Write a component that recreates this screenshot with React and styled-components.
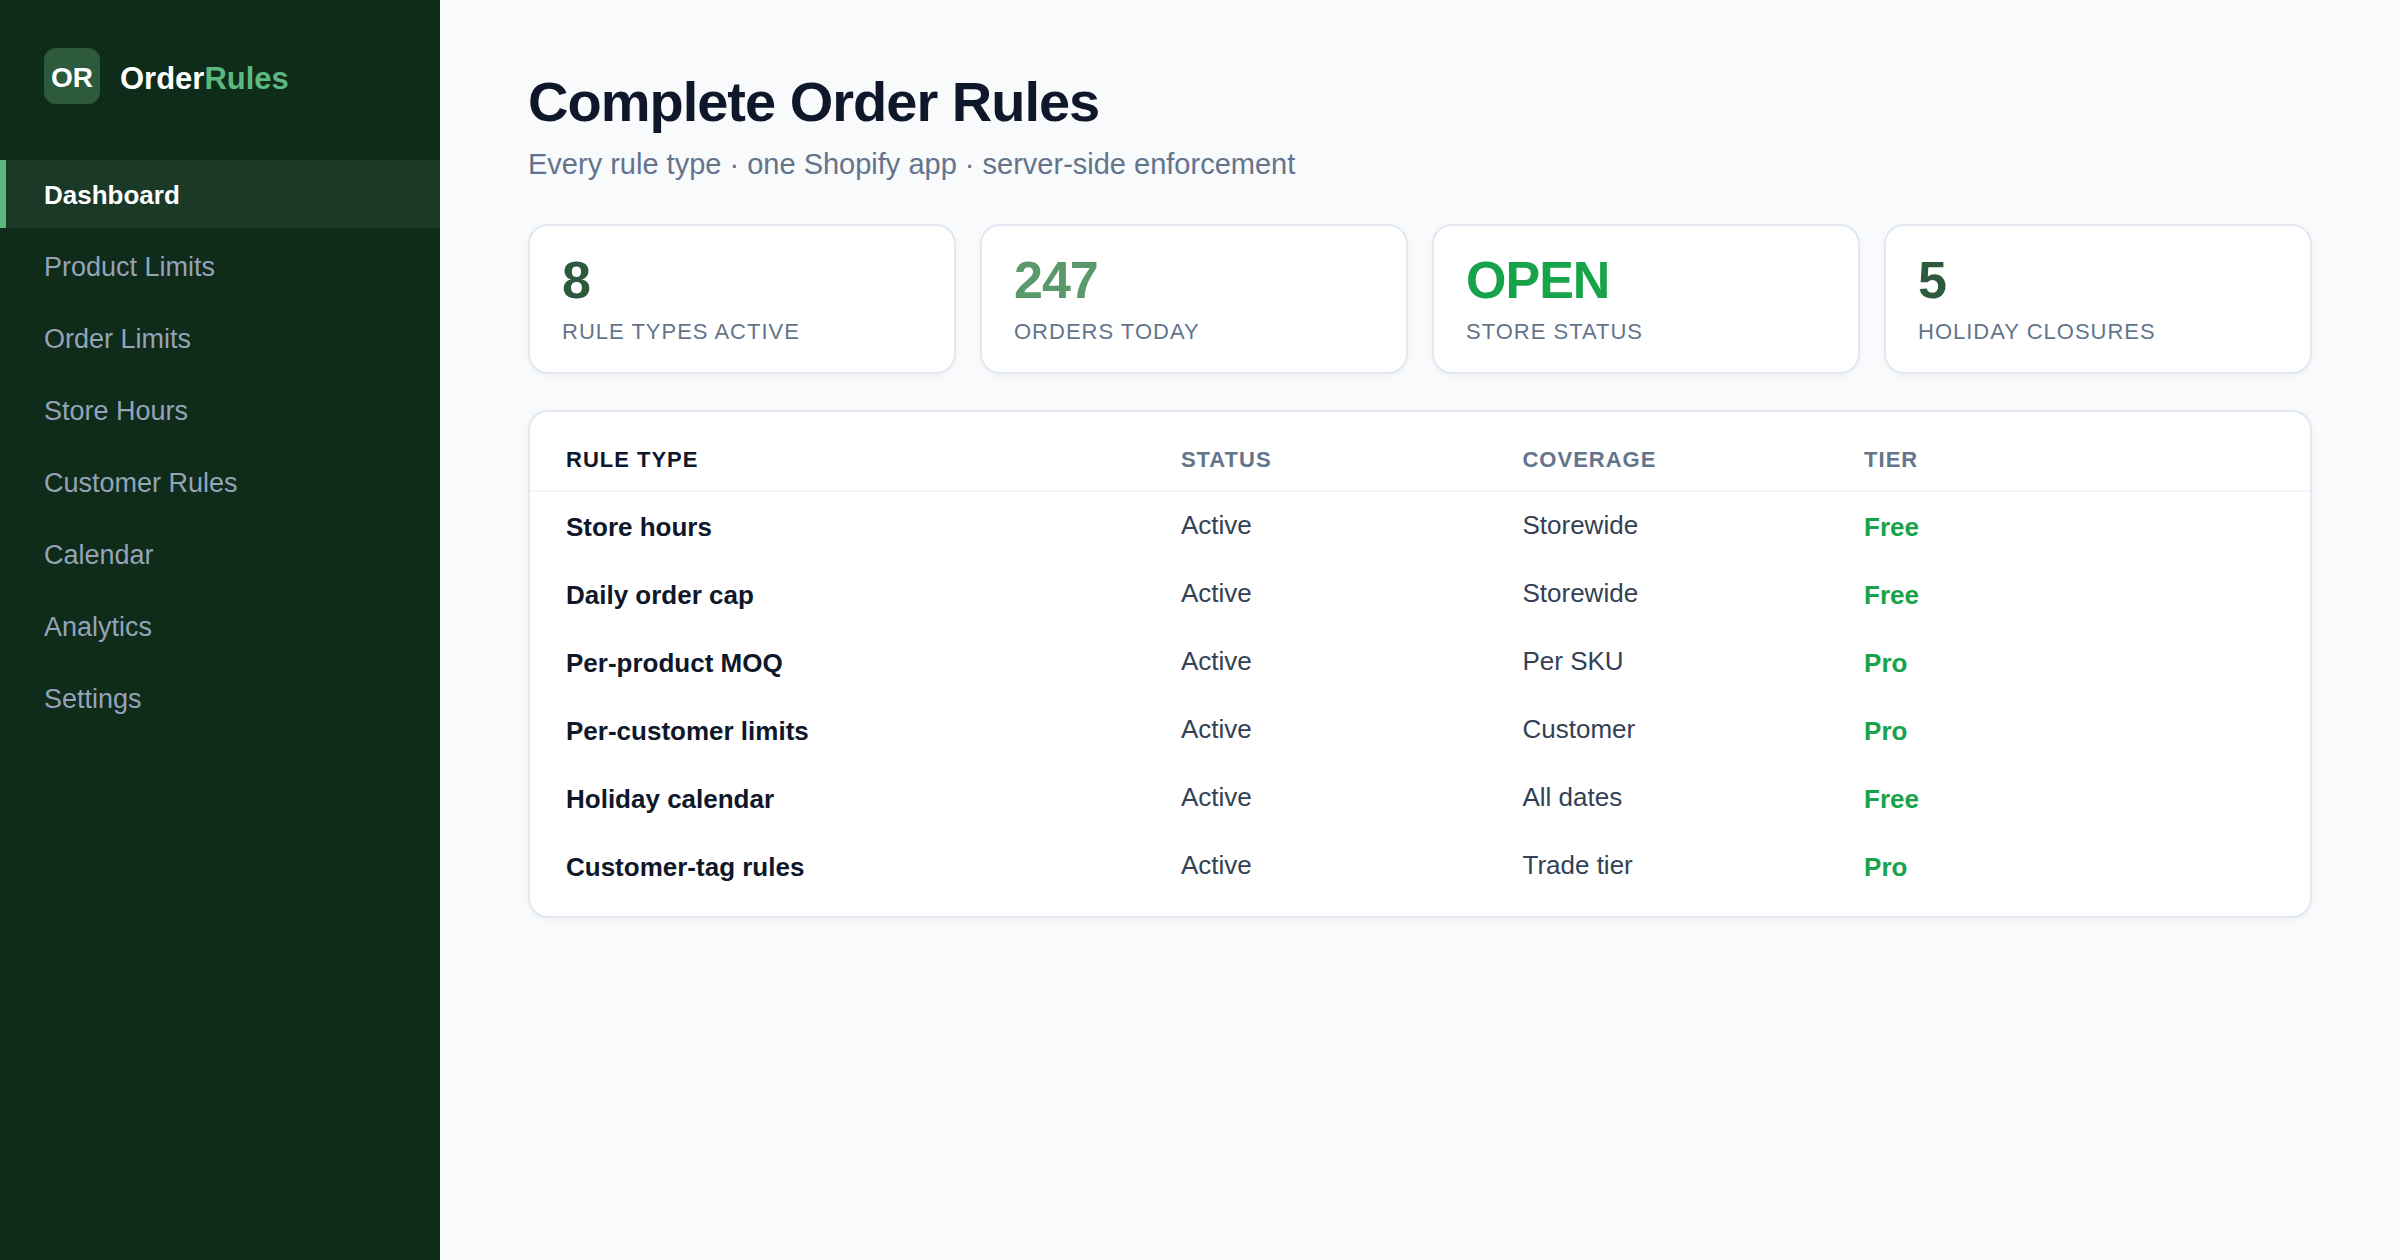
import { useState } from "react";
import styled, { createGlobalStyle } from "styled-components";

const GlobalStyle = createGlobalStyle`
  * {
    box-sizing: border-box;
  }

  body {
    margin: 0;
    background: #f8fafc;
    color: #0f172a;
    font-family: "Liberation Sans", Arial, sans-serif;
  }
`;

const Layout = styled.div`
  display: flex;
  min-height: 100vh;
`;

const Sidebar = styled.aside`
  flex: 0 0 440px;
  padding-top: 48px;
  background: #0f2b1a;
`;

const Brand = styled.div`
  display: flex;
  align-items: center;
  gap: 20px;
  margin: 0 44px 56px;
`;

const Logo = styled.div`
  display: flex;
  align-items: center;
  justify-content: center;
  width: 56px;
  height: 56px;
  padding-top: 4px;
  border-radius: 12px;
  background: #2d5a3d;
  color: #fff;
  font-size: 28px;
  font-weight: 700;
`;

const BrandName = styled.div`
  padding-top: 6px;
  color: #fff;
  font-size: 31px;
  line-height: 36px;
  font-weight: 700;

  span {
    color: #5cb87f;
  }
`;

const Nav = styled.nav`
  display: flex;
  flex-direction: column;
  gap: 4px;
`;

const NavItem = styled.a`
  padding: 19px 38px 17px;
  border-left: 6px solid ${(props) => (props.$active ? "#5cb87f" : "transparent")};
  background: ${(props) => (props.$active ? "#1a3a27" : "transparent")};
  color: ${(props) => (props.$active ? "#fff" : "#94a3b8")};
  font-size: ${(props) => (props.$active ? "26px" : "27px")};
  font-weight: ${(props) => (props.$active ? 700 : 400)};
  line-height: 32px;
  text-decoration: none;
`;

const Content = styled.main`
  flex: 1;
  min-width: 0;
  padding: 72px 88px;
`;

const Title = styled.h1`
  margin: 0 0 16px;
  font-size: 56px;
  line-height: 60px;
  letter-spacing: -1px;
`;

const Subtitle = styled.p`
  margin: 0 0 44px;
  color: #64748b;
  font-size: 29px;
  line-height: 32px;
`;

const Stats = styled.section`
  display: grid;
  grid-template-columns: repeat(4, 1fr);
  gap: 24px;
  margin-bottom: 36px;
`;

const Card = styled.div`
  border: 2px solid #e2e8f0;
  border-radius: 20px;
  background: #fff;
  box-shadow: 0 2px 6px rgba(15, 23, 42, 0.04);
`;

const StatCard = styled(Card)`
  padding: 28px 32px 27px;
`;

const StatValue = styled.div`
  margin-bottom: 13px;
  color: ${(props) => props.$color};
  font-size: 52px;
  font-weight: 700;
  line-height: 52px;
  letter-spacing: -1px;
`;

const StatLabel = styled.div`
  color: #64748b;
  font-size: 22px;
  line-height: 26px;
  letter-spacing: 1px;
  text-transform: uppercase;
`;

const Panel = styled(Card)`
  padding: 16px 0;
`;

const Table = styled.table`
  display: block;
  width: 100%;

  thead,
  tbody {
    display: block;
  }
`;

const Row = styled.tr`
  display: grid;
  grid-template-columns: 18fr 10fr 10fr 12fr;
  padding: 0 36px;
  border-bottom: ${(props) => (props.$head ? "2px solid #f1f5f9" : "0")};
`;

const HeadCell = styled.th`
  padding: 19px 0 17px;
  color: #64748b;
  font-size: 22px;
  line-height: 26px;
  letter-spacing: 1px;
  text-align: left;
  text-transform: uppercase;

  &:first-child {
    color: #0f172a;
  }
`;

const Cell = styled.td`
  padding: 17px 0 19px;
  color: #334155;
  font-size: 26px;
  line-height: 32px;
`;

const NameCell = styled.th`
  padding: 19px 0 17px;
  font-size: 26px;
  line-height: 32px;
  text-align: left;
`;

const TierCell = styled(Cell)`
  padding: 19px 0 17px;
  color: #16a34a;
  font-weight: 700;
`;

const navItems = [
  "Dashboard",
  "Product Limits",
  "Order Limits",
  "Store Hours",
  "Customer Rules",
  "Calendar",
  "Analytics",
  "Settings",
];

const stats = [
  { value: "8", label: "Rule types active", color: "#2d5a3d" },
  { value: "247", label: "Orders today", color: "#5a9a6a" },
  { value: "OPEN", label: "Store status", color: "#16a34a" },
  { value: "5", label: "Holiday closures", color: "#2d5a3d" },
];

const rules = [
  { name: "Store hours", status: "Active", coverage: "Storewide", tier: "Free" },
  { name: "Daily order cap", status: "Active", coverage: "Storewide", tier: "Free" },
  { name: "Per-product MOQ", status: "Active", coverage: "Per SKU", tier: "Pro" },
  { name: "Per-customer limits", status: "Active", coverage: "Customer", tier: "Pro" },
  { name: "Holiday calendar", status: "Active", coverage: "All dates", tier: "Free" },
  { name: "Customer-tag rules", status: "Active", coverage: "Trade tier", tier: "Pro" },
];

function App() {
  const [active, setActive] = useState("Dashboard");

  return (
    <Layout>
      <GlobalStyle />
      <Sidebar>
        <Brand>
          <Logo>OR</Logo>
          <BrandName>
            Order<span>Rules</span>
          </BrandName>
        </Brand>
        <Nav>
          {navItems.map((item) => (
            <NavItem
              key={item}
              href="#"
              $active={item === active}
              aria-current={item === active ? "page" : undefined}
              onClick={(e) => {
                e.preventDefault();
                setActive(item);
              }}
            >
              {item}
            </NavItem>
          ))}
        </Nav>
      </Sidebar>
      <Content>
        <Title>Complete Order Rules</Title>
        <Subtitle>Every rule type · one Shopify app · server-side enforcement</Subtitle>
        <Stats>
          {stats.map((stat) => (
            <StatCard key={stat.label}>
              <StatValue $color={stat.color}>{stat.value}</StatValue>
              <StatLabel>{stat.label}</StatLabel>
            </StatCard>
          ))}
        </Stats>
        <Panel>
          <Table>
            <thead>
              <Row $head>
                <HeadCell scope="col">Rule type</HeadCell>
                <HeadCell scope="col">Status</HeadCell>
                <HeadCell scope="col">Coverage</HeadCell>
                <HeadCell scope="col">Tier</HeadCell>
              </Row>
            </thead>
            <tbody>
              {rules.map((rule) => (
                <Row key={rule.name}>
                  <NameCell scope="row">{rule.name}</NameCell>
                  <Cell>{rule.status}</Cell>
                  <Cell>{rule.coverage}</Cell>
                  <TierCell>{rule.tier}</TierCell>
                </Row>
              ))}
            </tbody>
          </Table>
        </Panel>
      </Content>
    </Layout>
  );
}

export default App;
